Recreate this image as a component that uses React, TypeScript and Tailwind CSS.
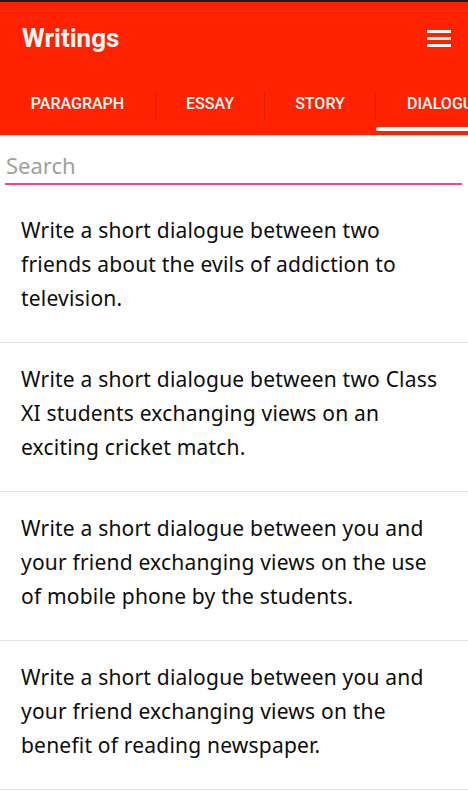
import React from "react";

const items = [
  "Write a short dialogue between two friends about the evils of addiction to television.",
  "Write a short dialogue between two Class XI students exchanging views on an exciting cricket match.",
  "Write a short dialogue between you and your friend exchanging views on the use of mobile phone by the students.",
  "Write a short dialogue between you and your friend exchanging views on the benefit of reading newspaper.",
];

export default function App() {
  return (
    <div className="w-[468px] h-[800px] overflow-hidden bg-white" style={{ fontFamily: '"Noto Sans", sans-serif' }}>
      <div className="h-[2px] bg-[#1c1c1c]" />
      <div className="bg-[#ff2200]">
        <div className="h-[73px] flex items-center justify-between pl-[22px] pr-[17px]">
          <span className="text-[26px] font-bold text-[#f6f6f6] font-['Roboto',sans-serif]">Writings</span>
          <svg width="24" height="17" viewBox="0 0 24 17">
            <rect x="0" y="0" width="24" height="3" fill="#f6f6f6" />
            <rect x="0" y="7" width="24" height="3" fill="#f6f6f6" />
            <rect x="0" y="14" width="24" height="3" fill="#f6f6f6" />
          </svg>
        </div>
        <div className="h-[60px] flex items-center whitespace-nowrap overflow-hidden font-['Roboto',sans-serif] text-[16px] font-medium text-[#fafafa]">
          <div className="w-[155px] h-[60px] shrink-0 flex items-center justify-center pb-[2px]">PARAGRAPH</div>
          <div className="w-px h-[29px] bg-[#e01f00] shrink-0" />
          <div className="w-[108px] h-[60px] shrink-0 flex items-center justify-center pb-[2px]">ESSAY</div>
          <div className="w-px h-[29px] bg-[#e01f00] shrink-0" />
          <div className="w-[110px] h-[60px] shrink-0 flex items-center justify-center pb-[2px]">STORY</div>
          <div className="w-px h-[29px] bg-[#e01f00] shrink-0" />
          <div className="relative h-[60px] shrink-0 flex items-center pl-[31px] pr-[31px] pb-[2px]">
            DIALOGUE
            <div className="absolute left-0 right-0 bottom-[4px] h-[4px] rounded-full bg-white" />
          </div>
        </div>
      </div>
      <div className="h-px bg-[#ffd6cc]" />
      <div className="px-[5px] pt-[12px]">
        <div className="text-[22px] text-[#a0a0a0] leading-[34px] pl-px">Search</div>
        <div className="h-[2px] bg-[#ff4081] mr-px mt-[1px]" />
      </div>
      <div className="mt-[9px]">
        {items.map((t) => (
          <div key={t} className="pt-[19px] pb-[27px] pl-[21px] pr-[24px] border-b border-[#e3e3e3]">
            <p className="text-[21px] leading-[34px] tracking-[0.2px] text-[#0d0d0d]">{t}</p>
          </div>
        ))}
      </div>
    </div>
  );
}
